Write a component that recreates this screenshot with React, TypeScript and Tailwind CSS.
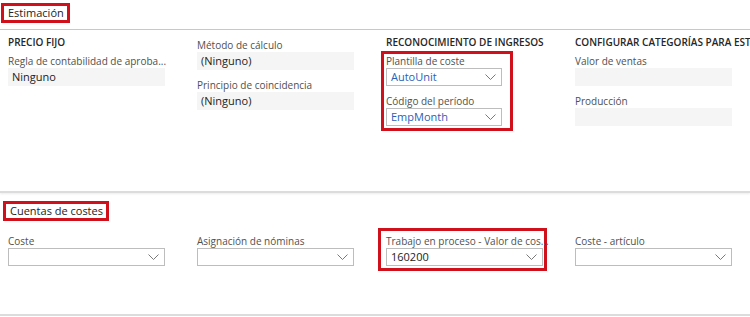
const FONT = { fontFamily: '"Open Sans", "Noto Sans", sans-serif' };

function Chevron() {
  return (
    <svg width="11" height="6" viewBox="0 0 11 6" className="shrink-0">
      <polyline points="0.5,0.5 5.5,5.5 10.5,0.5" fill="none" stroke="#6b6b6b" strokeWidth="0.9" />
    </svg>
  );
}

function Label({ children }: { children: React.ReactNode }) {
  return (
    <div className="h-[14px] leading-[14px] text-[10px] text-[#505050] whitespace-nowrap">
      {children}
    </div>
  );
}

function ReadField({ value, w = 'w-[157px]' }: { value?: string; w?: string }) {
  return (
    <div className={`${w} h-[18px] bg-[#f5f5f5] px-1 text-[11px] leading-[18px] text-[#222]`}>
      {value}
    </div>
  );
}

function Select({ value, blue, w = 'w-[157px]' }: { value?: string; blue?: boolean; w?: string }) {
  return (
    <div
      className={`${w} h-[18px] border border-[#bdbdbd] bg-white pl-1 pr-[5px] flex items-center justify-between text-[11px] ${
        blue ? 'text-[#2a5fb8]' : 'text-[#222]'
      }`}
    >
      <span>{value}</span>
      <Chevron />
    </div>
  );
}

function SectionHead({ children }: { children: React.ReactNode }) {
  return (
    <div className="h-[14px] leading-[14px] text-[10px] font-semibold text-[#262626] whitespace-nowrap">
      {children}
    </div>
  );
}

function Title({ children }: { children: React.ReactNode }) {
  return (
    <div className="w-fit h-[20px] border-[3px] border-[#d0101b] pl-[4px] pr-[3px] text-[11px] leading-[14px] text-[#222]">
      {children}
    </div>
  );
}

export default function App() {
  return (
    <div className="w-[750px] h-[317px] bg-white overflow-hidden" style={FONT}>
      {/* Estimación */}
      <section className="h-[193px] border-b-2 border-[#dcdcdc] shadow-[0_1px_2px_rgba(0,0,0,0.08)]">
        <div className="h-[30px] border-b border-[#c8c8c8] pl-px pt-[3px]">
          <Title>Estimación</Title>
        </div>

        <div className="grid grid-cols-[189px_189px_189px_189px] pl-2 pt-[5px]">
          {/* Precio fijo */}
          <div className="flex flex-col">
            <SectionHead>PRECIO FIJO</SectionHead>
            <div className="mt-[5px]">
              <Label>Regla de contabilidad de aproba...</Label>
            </div>
            <ReadField value="Ninguno" />
          </div>

          {/* Método */}
          <div className="flex flex-col pt-[3px]">
            <Label>Método de cálculo</Label>
            <ReadField value="(Ninguno)" />
            <div className="mt-[8px]">
              <Label>Principio de coincidencia</Label>
            </div>
            <ReadField value="(Ninguno)" />
          </div>

          {/* Reconocimiento de ingresos */}
          <div className="flex flex-col">
            <SectionHead>RECONOCIMIENTO DE INGRESOS</SectionHead>
            <div className="ml-[-5px] mt-[2px] w-[132px] border-[3px] border-[#d0101b] pl-[2px] pb-[2px]">
              <Label>Plantilla de coste</Label>
              <Select value="AutoUnit" blue w="w-[116px]" />
              <div className="mt-[8px]">
                <Label>Código del período</Label>
              </div>
              <Select value="EmpMonth" blue w="w-[116px]" />
            </div>
          </div>

          {/* Configurar categorías */}
          <div className="flex flex-col">
            <SectionHead>CONFIGURAR CATEGORÍAS PARA ESTIMACIÓN</SectionHead>
            <div className="mt-[5px]">
              <Label>Valor de ventas</Label>
            </div>
            <ReadField />
            <div className="mt-[8px]">
              <Label>Producción</Label>
            </div>
            <ReadField />
          </div>
        </div>
      </section>

      {/* Cuentas de costes */}
      <section className="h-[121px] border-b-2 border-[#dcdcdc] mt-[2px]">
        <div className="pl-[3px] pt-[6px]">
          <Title>Cuentas de costes</Title>
        </div>

        <div className="grid grid-cols-[189px_189px_189px_189px] pl-2 mt-[13px] items-start">
          <div>
            <Label>Coste</Label>
            <Select />
          </div>
          <div>
            <Label>Asignación de nóminas</Label>
            <Select />
          </div>
          <div className="ml-[-8px] mt-[-6px] w-[169px] border-[3px] border-[#d0101b] pl-[5px] pt-[3px] pb-[2px]">
            <Label>Trabajo en proceso - Valor de cos...</Label>
            <Select value="160200" />
          </div>
          <div>
            <Label>Coste - artículo</Label>
            <Select />
          </div>
        </div>
      </section>
    </div>
  );
}
